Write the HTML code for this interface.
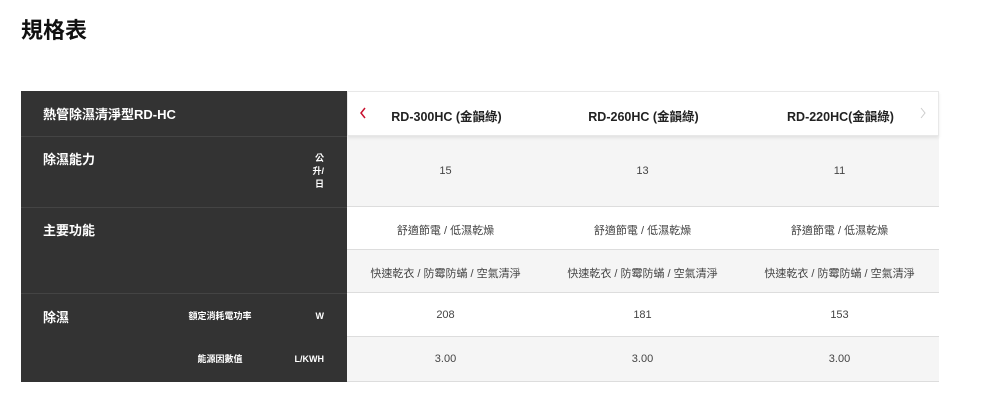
<!DOCTYPE html>
<html><head><meta charset="utf-8"><style>
*{margin:0;padding:0;box-sizing:border-box}
body{width:1000px;height:400px;background:#fff;font-family:"Liberation Sans","Noto Sans CJK TC",sans-serif;position:relative;overflow:hidden}
.t{position:absolute;left:21px;top:17px;font-size:22px;font-weight:bold;color:#111;line-height:28px}
.dark{position:absolute;left:21px;top:91px;width:326px;height:291px;background:#333}
.ln{position:absolute;left:21px;width:326px;height:1px;background:#444}
.lab{position:absolute;color:#fff;font-weight:bold;font-size:13px;line-height:16px}
.sm{position:absolute;color:#fff;font-weight:bold;font-size:9px;line-height:13px;text-align:right}
.row{position:absolute;left:347px;width:592px;border-bottom:1px solid #ddd}
.row div{position:absolute;width:197px;text-align:center;color:#444;font-size:11px}
.hdr{position:absolute;left:347px;top:91px;width:592px;height:45px;background:#fff;border:1px solid #e8e8e8;box-shadow:0 2px 3px rgba(0,0,0,.08)}
.hdr div{position:absolute;top:14px;width:197px;text-align:center;font-weight:bold;font-size:12.5px;color:#222}
</style></head><body>
<div class="t">規格表</div>
<div class="dark"></div>
<div class="ln" style="top:136px"></div>
<div class="ln" style="top:207px"></div>
<div class="ln" style="top:293px"></div>
<div class="lab" style="left:43px;top:107px">熱管除濕清淨型RD-HC</div>
<div class="lab" style="left:43px;top:152px">除濕能力</div>
<div class="sm" style="left:300px;top:152px;width:24px">公<br>升/<br>日</div>
<div class="lab" style="left:43px;top:223px">主要功能</div>
<div class="lab" style="left:43px;top:310px">除濕</div>
<div class="sm" style="left:180px;top:310px;width:80px;text-align:center">額定消耗電功率</div>
<div class="sm" style="left:300px;top:310px;width:24px">W</div>
<div class="sm" style="left:180px;top:353px;width:80px;text-align:center">能源因數值</div>
<div class="sm" style="left:280px;top:353px;width:44px">L/KWH</div>
<div class="row" style="top:136px;height:71px;background:#f5f5f5"><div style="left:0;top:29px">15</div><div style="left:197px;top:29px">13</div><div style="left:394px;top:29px">11</div></div>
<div class="row" style="top:207px;height:43px;background:#fff"><div style="left:0;top:15px">舒適節電 / 低濕乾燥</div><div style="left:197px;top:15px">舒適節電 / 低濕乾燥</div><div style="left:394px;top:15px">舒適節電 / 低濕乾燥</div></div>
<div class="row" style="top:250px;height:43px;background:#f5f5f5"><div style="left:0;top:15px">快速乾衣 / 防霉防蟎 / 空氣清淨</div><div style="left:197px;top:15px">快速乾衣 / 防霉防蟎 / 空氣清淨</div><div style="left:394px;top:15px">快速乾衣 / 防霉防蟎 / 空氣清淨</div></div>
<div class="row" style="top:293px;height:44px;background:#fff"><div style="left:0;top:16px">208</div><div style="left:197px;top:16px">181</div><div style="left:394px;top:16px">153</div></div>
<div class="row" style="top:337px;height:45px;background:#f5f5f5"><div style="left:0;top:16px">3.00</div><div style="left:197px;top:16px">3.00</div><div style="left:394px;top:16px">3.00</div></div>
<div class="hdr">
<svg style="position:absolute;left:11px;top:15px" width="8" height="12"><path d="M6 1L2 6L6 11" stroke="#c8102e" stroke-width="1.5" fill="none"/></svg>
<div style="left:0">RD-300HC (金韻綠)</div><div style="left:197px">RD-260HC (金韻綠)</div><div style="left:394px">RD-220HC(金韻綠)</div>
<svg style="position:absolute;left:571px;top:15px" width="8" height="12"><path d="M2 1L6 6L2 11" stroke="#ccc" stroke-width="1" fill="none"/></svg>
</div>
</body></html>
